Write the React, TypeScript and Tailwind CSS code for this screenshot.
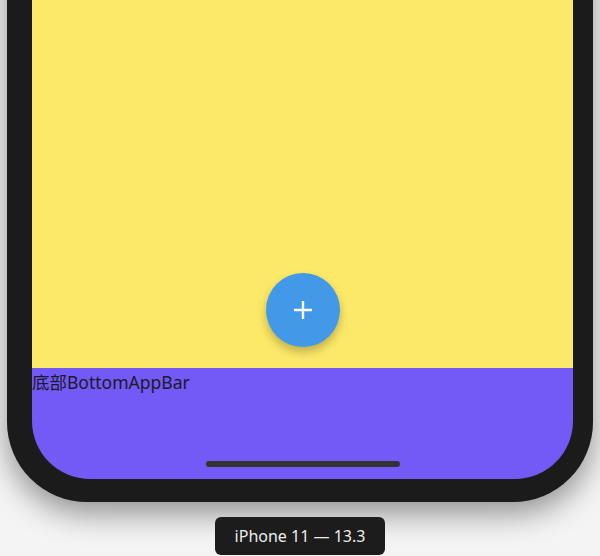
export default function App() {
  return (
    <div className="w-[600px] h-[556px] overflow-hidden bg-[#f4f4f4] flex flex-col items-center font-['Liberation_Sans','Noto_Sans_CJK_SC',sans-serif]">
      {/* Device frame */}
      <div className="mt-[-298px] w-[586px] h-[800px] shrink-0 rounded-b-[80px] bg-[#1b1b1b] pl-[25px] pr-[20px] pb-[23px] flex flex-col shadow-[0_12px_30px_rgba(0,0,0,0.4)]">
        <div className="flex-1 flex flex-col rounded-b-[58px] overflow-hidden">
          {/* Body */}
          <div className="flex-1 bg-[#fde968] flex flex-col items-center justify-end pb-[21px]">
            <button className="w-[74px] h-[74px] rounded-full bg-[#4299e8] flex items-center justify-center shadow-[0_5px_10px_rgba(0,0,0,0.25)]">
              <svg width="22" height="22" viewBox="0 0 22 22" fill="none" stroke="white" strokeWidth="2.4">
                <path d="M11 2v18M2 11h18" />
              </svg>
            </button>
          </div>
          {/* Bottom app bar */}
          <div className="relative h-[111px] bg-[#7359f5]">
            <p className="font-['Noto_Sans','Noto_Sans_CJK_SC',sans-serif] text-[17.5px] leading-[28px] text-[#1a1a2a]">底部BottomAppBar</p>
            <div className="absolute bottom-[12px] left-1/2 -translate-x-1/2 w-[194px] h-[6px] rounded-full bg-[#333333]" />
          </div>
        </div>
      </div>
      {/* Device label */}
      <div className="mt-[15px] h-[38px] px-[20px] flex items-center rounded-[6px] bg-[#1c1c1c] text-[#ececec] text-[16px] font-['Noto_Sans',sans-serif]">
        iPhone 11 — 13.3
      </div>
    </div>
  );
}
